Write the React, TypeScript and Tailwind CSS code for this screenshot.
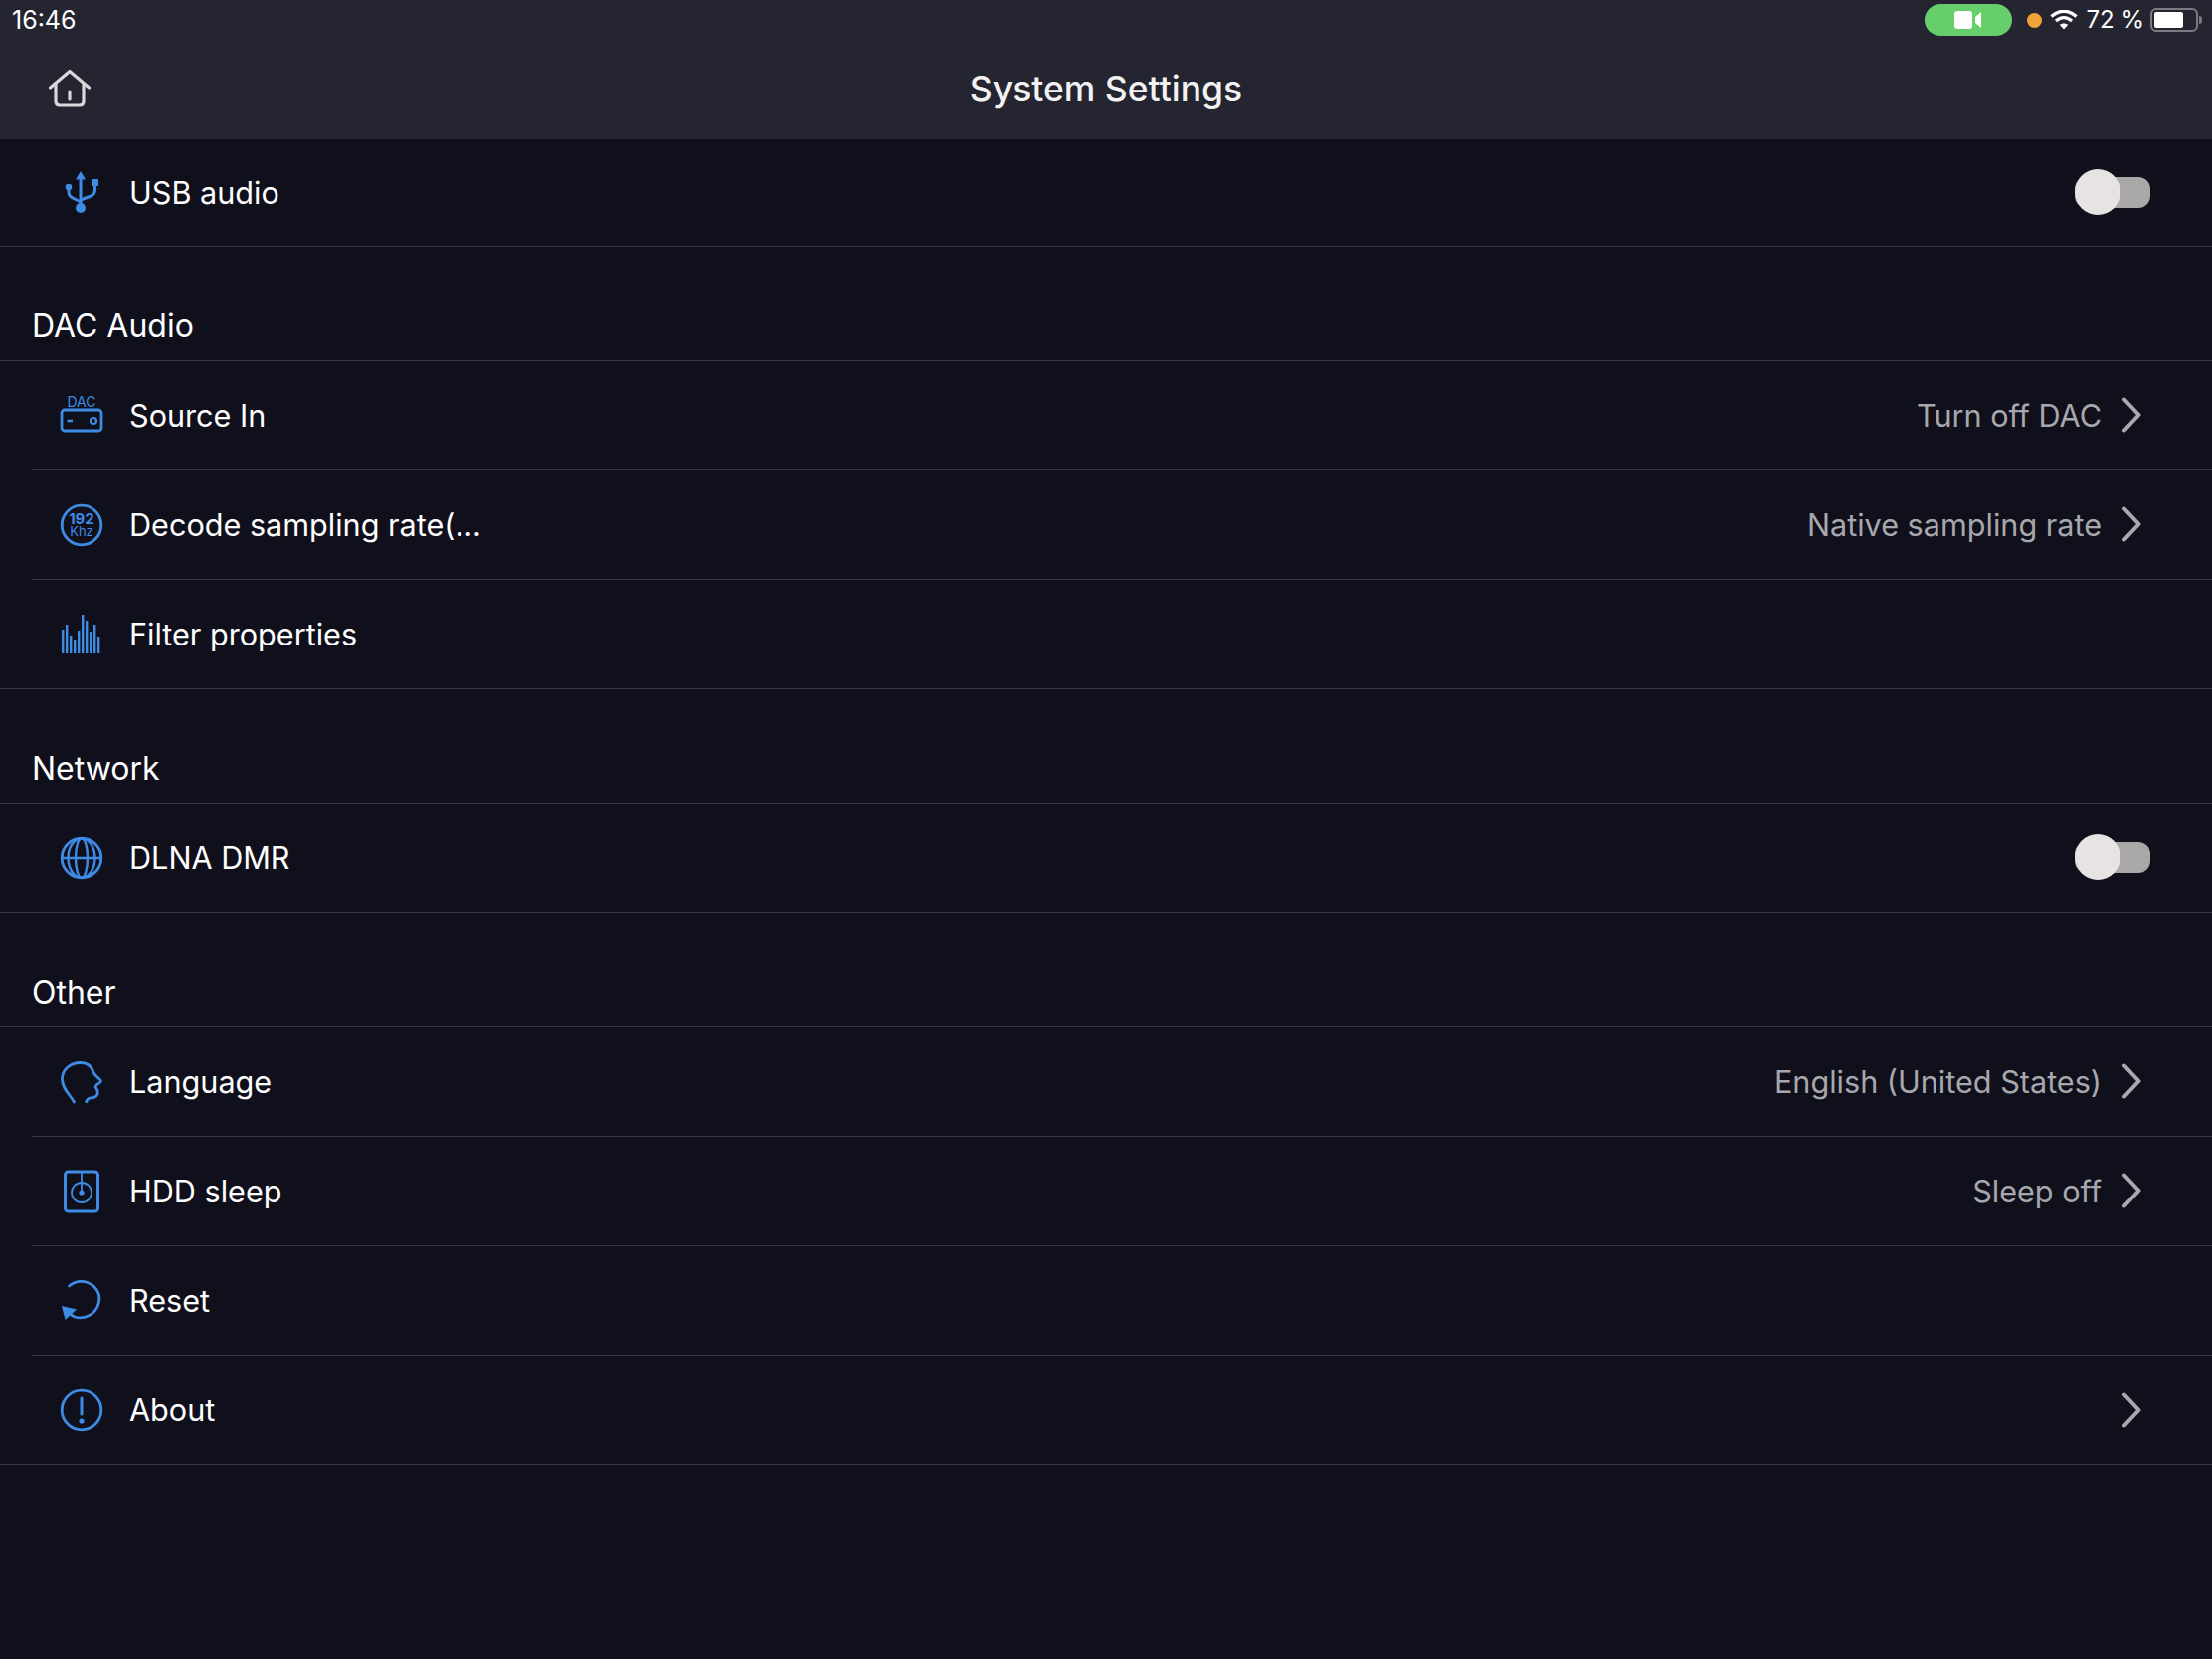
import type { ReactNode } from 'react'

const blue = '#3e8be4'

function UsbIcon() {
  return (
    <svg width="36" height="46" viewBox="0 0 36 46" fill="none">
      <path d="M17 1 L22 9.5 H12 Z" fill={blue} />
      <path d="M17 8 V38" stroke={blue} strokeWidth="3" />
      <circle cx="17" cy="38" r="5" fill={blue} />
      <path d="M5 17 V22 Q5 26 9 28 L17 32" stroke={blue} strokeWidth="3" />
      <circle cx="5" cy="17" r="3.3" fill={blue} />
      <path d="M31.5 14 V20 Q31.5 24 27.5 26 L17 30" stroke={blue} strokeWidth="3" />
      <rect x="28" y="9" width="7" height="7" fill={blue} />
    </svg>
  )
}

function DacIcon() {
  return (
    <svg width="44" height="42" viewBox="0 0 44 42" fill="none" className="overflow-visible">
      <text x="22" y="12" textAnchor="middle" fontFamily="Inter, sans-serif" fontSize="14" fill={blue}>DAC</text>
      <rect x="2" y="15" width="40" height="21" rx="3" stroke={blue} strokeWidth="2.8" />
      <path d="M7.5 26 H13" stroke={blue} strokeWidth="2.6" />
      <circle cx="34" cy="26" r="3" stroke={blue} strokeWidth="2.2" />
    </svg>
  )
}

function RateIcon() {
  return (
    <svg width="44" height="44" viewBox="0 0 44 44" fill="none">
      <circle cx="22" cy="22" r="19.8" stroke={blue} strokeWidth="2.8" />
      <text x="22" y="21" textAnchor="middle" fontFamily="Inter, sans-serif" fontSize="15" fontWeight="700" fill={blue}>192</text>
      <text x="22" y="33" textAnchor="middle" fontFamily="Inter, sans-serif" fontSize="13" fill={blue}>Khz</text>
    </svg>
  )
}

function FilterIcon() {
  const bars = [[2, 24], [6, 29], [10, 18], [14, 14], [18, 23], [22, 39], [26, 33], [30, 22], [34, 29], [38, 17]]
  return (
    <svg width="44" height="44" viewBox="0 0 44 44" fill="none">
      {bars.map(([x, h]) => (
        <rect key={x} x={x} y={41 - h} width="2.4" height={h} fill={blue} />
      ))}
    </svg>
  )
}

function GlobeIcon() {
  return (
    <svg width="44" height="44" viewBox="0 0 44 44" fill="none" stroke={blue} strokeWidth="2.4">
      <circle cx="22" cy="22" r="19.8" strokeWidth="2.8" />
      <path d="M2 22 H42" />
      <ellipse cx="22" cy="22" rx="6" ry="19.8" />
      <ellipse cx="22" cy="22" rx="13.5" ry="19.8" />
    </svg>
  )
}

function LanguageIcon() {
  return (
    <svg width="44" height="46" viewBox="0 0 44 46" fill="none">
      <path
        d="M15 44 C 11 36 2.5 30 2.5 20 C 2.5 10 11 3.5 21 3.5 C 29 3.5 33 9 34.5 14 C 35.5 17 41.5 20 41.5 22 C 41.5 24 36 25 36 27.5 C 36 29 38.5 30 38 32.5 C 39 35 37 38 34 38.5 C 30 39 27 39 26.7 44"
        stroke={blue}
        strokeWidth="2.8"
      />
    </svg>
  )
}

function HddIcon() {
  return (
    <svg width="44" height="44" viewBox="0 0 44 44" fill="none">
      <rect x="5.5" y="2" width="33" height="40" rx="3" stroke={blue} strokeWidth="3" />
      <circle cx="22" cy="23" r="10" stroke={blue} strokeWidth="1.8" />
      <path d="M22 3 V22" stroke={blue} strokeWidth="1.8" />
      <circle cx="22" cy="23" r="2.6" fill={blue} />
    </svg>
  )
}

function ResetIcon() {
  return (
    <svg width="44" height="44" viewBox="0 0 44 44" fill="none">
      <path d="M9.5 7 C 14 2.5 22 1 28 3.5 C 37 7 42 16 39 25 C 36 36 24 41 15 38 C 13 37 11.5 36 10.5 35" stroke={blue} strokeWidth="2.8" strokeLinecap="round" />
      <path d="M2 27 L17 30.5 L5.5 41 Z" fill={blue} />
    </svg>
  )
}

function AboutIcon() {
  return (
    <svg width="44" height="44" viewBox="0 0 44 44" fill="none">
      <circle cx="22" cy="22" r="19.8" stroke={blue} strokeWidth="2.8" />
      <path d="M22 10 V26" stroke={blue} strokeWidth="3" strokeLinecap="round" />
      <circle cx="22" cy="33" r="2.6" fill={blue} />
    </svg>
  )
}

function Chevron() {
  return (
    <svg width="20" height="36" viewBox="0 0 20 36" fill="none">
      <path d="M3 2.5 L17.5 18 L3 33.5" stroke="#a9a9ad" strokeWidth="4" strokeLinecap="round" strokeLinejoin="round" />
    </svg>
  )
}

function Toggle() {
  return (
    <div className="relative h-[31px] w-[76px] rounded-[12px] bg-[#a9a8a6]">
      <div className="absolute left-0 top-[-8px] h-[46px] w-[46px] rounded-full bg-[#e6e3e2]" />
    </div>
  )
}

type RowProps = {
  icon: ReactNode
  label: string
  value?: string
  chevron?: boolean
  toggle?: boolean
  last?: boolean
  short?: boolean
}

function Row({ icon, label, value, chevron, toggle, last, short }: RowProps) {
  const height = short ? 'h-[107px]' : last ? 'h-[109px]' : 'h-[110px]'
  return (
    <div className={last ? 'border-b border-[#33343f]' : 'pl-8'}>
      <div className={`flex ${height} items-center pr-[71px] ${last ? 'pl-[60px]' : 'border-b border-[#33343f] pl-7'}`}>
        <div className="flex w-[44px] items-center justify-center">{icon}</div>
        <span className="ml-[26px] text-[30.6px] text-white">{label}</span>
        <div className="ml-auto flex items-center">
          {value && <span className="text-[30.6px] text-[#a8a8ac]">{value}</span>}
          {chevron && (
            <div className="ml-5">
              <Chevron />
            </div>
          )}
          {toggle && (
            <div className="-mr-[9px]">
              <Toggle />
            </div>
          )}
        </div>
      </div>
    </div>
  )
}

function SectionLabel({ children }: { children: ReactNode }) {
  return (
    <div className="flex h-[115px] items-end border-b border-[#33343f] px-8 pb-[10px] text-[32px] text-white">
      {children}
    </div>
  )
}

function StatusBar() {
  return (
    <div className="flex h-[40px] items-center justify-between pl-3 pr-[10px] text-[25px] text-white">
      <span className="mt-[2px]">16:46</span>
      <div className="flex items-center">
        <div className="flex h-[32px] w-[88px] items-center justify-center rounded-full bg-[#66cf6b]">
          <svg width="28" height="18" viewBox="0 0 28 18" fill="white">
            <rect x="0" y="0" width="18" height="18" rx="3" />
            <path d="M21 6 L27 1 V17 L21 12 Z" />
          </svg>
        </div>
        <div className="ml-[15px] h-[15px] w-[15px] rounded-full bg-[#f2a33a]" />
        <svg className="ml-[8px]" width="28" height="20" viewBox="0 0 28 20" fill="none" stroke="white" strokeWidth="3.4">
          <path d="M1.5 6.5 C 9 -0.5 19 -0.5 26.5 6.5" />
          <path d="M6 11 C 11 6.5 17 6.5 22 11" />
          <path d="M14 19.5 L9.8 15 C 12 13 16 13 18.2 15 Z" fill="white" stroke="none" />
        </svg>
        <span className="ml-[8px] text-[24px]">72 %</span>
        <div className="ml-[6px] flex items-center">
          <div className="flex h-[24px] w-[48px] items-center rounded-[6px] border-2 border-[#7b7b83] px-[2px]">
            <div className="h-[16px] w-[29px] rounded-[2px] bg-white" />
          </div>
          <div className="ml-[1px] h-[8px] w-[3px] rounded-r-full bg-[#7b7b83]" />
        </div>
      </div>
    </div>
  )
}

export default function App() {
  return (
    <div className="min-h-[1668px] bg-[#0f101c] font-['Inter',sans-serif]">
      <header className="h-[140px] bg-[#242530]">
        <StatusBar />
        <div className="grid h-[100px] grid-cols-[1fr_auto_1fr] items-center">
          <div className="-mt-[2px] pl-[49px]">
            <svg width="42" height="38" viewBox="0 0 42 38" fill="none" stroke="#d8d8da" strokeWidth="3.2" strokeLinecap="round" strokeLinejoin="round">
              <path d="M1.5 18 L21 1.5 L40.5 18" />
              <path d="M7 14 V32 Q7 36 11 36 H31 Q35 36 35 32 V14" />
              <path d="M21 22 V30" />
            </svg>
          </div>
          <h1 className="text-[35.5px] font-medium text-[#f2f2f3]">System Settings</h1>
        </div>
      </header>

      <Row icon={<UsbIcon />} label="USB audio" toggle last short />

      <SectionLabel>DAC Audio</SectionLabel>
      <Row icon={<DacIcon />} label="Source In" value="Turn off DAC" chevron />
      <Row icon={<RateIcon />} label="Decode sampling rate(..." value="Native sampling rate" chevron />
      <Row icon={<FilterIcon />} label="Filter properties" last />

      <SectionLabel>Network</SectionLabel>
      <Row icon={<GlobeIcon />} label="DLNA DMR" toggle last />

      <SectionLabel>Other</SectionLabel>
      <Row icon={<LanguageIcon />} label="Language" value="English (United States)" chevron />
      <Row icon={<HddIcon />} label="HDD sleep" value="Sleep off" chevron />
      <Row icon={<ResetIcon />} label="Reset" />
      <Row icon={<AboutIcon />} label="About" chevron last />
    </div>
  )
}
